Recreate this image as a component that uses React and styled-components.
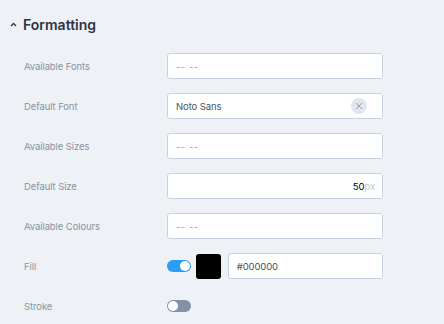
import React from 'react';
import styled, { createGlobalStyle } from 'styled-components';

const GlobalStyle = createGlobalStyle`
    html, body {
        margin: 0;
        padding: 0;
        background: #eef1f5;
        font-family: Inter, "Noto Sans", sans-serif;
    }
`

const Panel = styled.section`
    width: 444px;
    height: 324px;
    overflow: hidden;
    background: #eef1f5;
`

const Header = styled.div`
    display: flex;
    align-items: center;
    gap: 6px;
    height: 24px;
    margin-top: 12px;
    padding-left: 10px;
`

const Title = styled.h2`
    margin: 0;
    font-size: 14px;
    font-weight: 600;
    color: #2c3447;
`

const Rows = styled.div`
    display: flex;
    flex-direction: column;
    gap: 14px;
    margin-top: 17px;
`

const Row = styled.div`
    display: grid;
    grid-template-columns: 143px 216px;
    align-items: center;
    height: 26px;
    padding-left: 24px;
`

const Label = styled.label`
    font-size: 9.5px;
    letter-spacing: -0.1px;
    color: #8a93a3;
`

const Field = styled.div`
    position: relative;
    display: flex;
    align-items: center;
    justify-content: ${p => (p.right ? 'flex-end' : 'flex-start')};
    box-sizing: border-box;
    height: 26px;
    width: ${p => p.width || 216}px;
    padding: 0 ${p => (p.right ? 7 : 8)}px 0 8px;
    background: #fff;
    border: 1px solid #c8d2e0;
    border-radius: 3px;
    font-size: 9.5px;
    letter-spacing: -0.1px;
    color: #4b5163;
`

const Placeholder = styled.span`
    color: #9ea4b0;
    letter-spacing: 0.5px;
`

const ClearButton = styled.span`
    position: absolute;
    right: 15px;
    top: 4px;
    width: 16px;
    height: 16px;
    border-radius: 50%;
    background: #e3e7ed;
    display: flex;
    align-items: center;
    justify-content: center;
`

const Value = styled.span`
    color: #000;
`

const Unit = styled.span`
    color: #c4c8d0;
`

const Controls = styled.div`
    display: flex;
    align-items: center;
    gap: 5px;
`

const Toggle = styled.span`
    position: relative;
    display: inline-block;
    width: 24px;
    height: 12px;
    border-radius: 6px;
    background: ${p => (p.on ? '#2d9cf5' : '#8391a7')};

    &::after {
        content: "";
        position: absolute;
        top: 1px;
        left: ${p => (p.on ? '13px' : '1px')};
        width: 10px;
        height: 10px;
        border-radius: 50%;
        background: #fff;
    }
`

const Swatch = styled.span`
    width: 25px;
    height: 25px;
    border-radius: 3px;
    background: ${p => p.color};
    margin-right: 2px;
`

function Chevron() {
    return (
        <svg width="7" height="5" viewBox="0 0 7 5" fill="none">
            <path d="M1 4L3.5 1.5L6 4" stroke="#2c3447" strokeWidth="1.3" />
        </svg>
    )
}

function CloseIcon() {
    return (
        <svg width="8" height="8" viewBox="0 0 8 8" fill="none">
            <path d="M1 1L7 7M7 1L1 7" stroke="#9aa1ad" strokeWidth="1" />
        </svg>
    )
}

const EmptyValue = () => <Placeholder>-- --</Placeholder>

export default function App() {
    return (
        <Panel>
            <GlobalStyle />
            <Header>
                <Chevron />
                <Title>Formatting</Title>
            </Header>
            <Rows>
                <Row>
                    <Label>Available Fonts</Label>
                    <Field><EmptyValue /></Field>
                </Row>
                <Row>
                    <Label>Default Font</Label>
                    <Field>
                        Noto Sans
                        <ClearButton><CloseIcon /></ClearButton>
                    </Field>
                </Row>
                <Row>
                    <Label>Available Sizes</Label>
                    <Field><EmptyValue /></Field>
                </Row>
                <Row>
                    <Label>Default Size</Label>
                    <Field right>
                        <Value>50</Value>
                        <Unit>px</Unit>
                    </Field>
                </Row>
                <Row>
                    <Label>Available Colours</Label>
                    <Field><EmptyValue /></Field>
                </Row>
                <Row>
                    <Label>Fill</Label>
                    <Controls>
                        <Toggle on />
                        <Swatch color="#000" />
                        <Field width={156}>#000000</Field>
                    </Controls>
                </Row>
                <Row>
                    <Label>Stroke</Label>
                    <Controls>
                        <Toggle />
                    </Controls>
                </Row>
            </Rows>
        </Panel>
    )
}
